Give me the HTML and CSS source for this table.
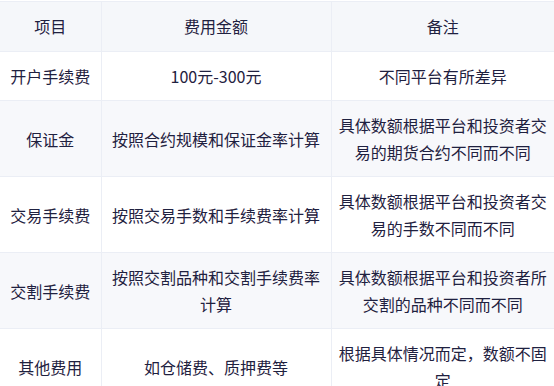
FILE: index.html
```html
<!DOCTYPE html>
<html lang="zh-CN">
<head>
<meta charset="utf-8">
<title>费用表</title>
<link rel="stylesheet" href="styles.css">
</head>
<body>
<table class="fee-table">
  <colgroup>
    <col class="c1">
    <col class="c2">
    <col class="c3">
  </colgroup>
  <thead>
    <tr><th>项目</th><th>费用金额</th><th>备注</th></tr>
  </thead>
  <tbody>
    <tr><td>开户手续费</td><td>100元-300元</td><td>不同平台有所差异</td></tr>
    <tr><td>保证金</td><td>按照合约规模和保证金率计算</td><td>具体数额根据平台和投资者交易的期货合约不同而不同</td></tr>
    <tr><td>交易手续费</td><td>按照交易手数和手续费率计算</td><td>具体数额根据平台和投资者交易的手数不同而不同</td></tr>
    <tr><td>交割手续费</td><td>按照交割品种和交割手续费率计算</td><td>具体数额根据平台和投资者所交割的品种不同而不同</td></tr>
    <tr><td>其他费用</td><td>如仓储费、质押费等</td><td>根据具体情况而定，数额不固定</td></tr>
  </tbody>
</table>
</body>
</html>
```
FILE: styles.css
```css
html, body {
  margin: 0;
  padding: 0;
  background: #ffffff;
}
body {
  padding-top: 1px;
  font-family: "Microsoft YaHei", "Noto Sans CJK SC", "Noto Sans", sans-serif;
  color: #1f2140;
}
.fee-table {
  width: 554px;
  border-collapse: collapse;
  table-layout: fixed;
  font-size: 16px;
  line-height: 27px;
}
.c1 { width: 101px; }
.c2 { width: 230px; }
.c3 { width: 223px; }
.fee-table th,
.fee-table td {
  border: 1px solid #ebeef5;
  text-align: center;
  vertical-align: middle;
  padding: 11px 7px 10px;
  font-weight: normal;
}
.fee-table th {
  padding: 11px 7px 11px;
  background: #f5f7fa;
}
.fee-table th:first-child,
.fee-table td:first-child {
  border-left: none;
}
.fee-table th:last-child,
.fee-table td:last-child {
  border-right: none;
}
.fee-table tbody tr:nth-child(even) td {
  background: #f7f8fb;
}
```
